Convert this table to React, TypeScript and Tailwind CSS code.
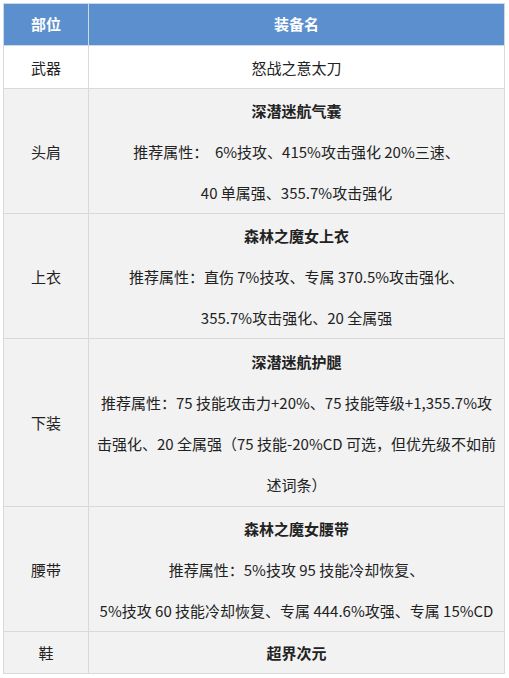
import React from 'react';

type Row = {
  slot: string;
  title?: string;
  lines: string[];
  white?: boolean;
  bold?: boolean;
  h: string;
};

const rows: Row[] = [
  { slot: '武器', lines: ['怒战之意太刀'], white: true, h: 'h-[43px]' },
  {
    slot: '头肩',
    title: '深潜迷航气囊',
    lines: ['推荐属性：  6%技攻、415%攻击强化 20%三速、', '40 单属强、355.7%攻击强化'],
    h: 'h-[125px]',
  },
  {
    slot: '上衣',
    title: '森林之魔女上衣',
    lines: ['推荐属性：直伤 7%技攻、专属 370.5%攻击强化、', '355.7%攻击强化、20 全属强'],
    h: 'h-[125px]',
  },
  {
    slot: '下装',
    title: '深潜迷航护腿',
    lines: [
      '推荐属性：75 技能攻击力+20%、75 技能等级+1,355.7%攻',
      '击强化、20 全属强（75 技能-20%CD 可选，但优先级不如前',
      '述词条）',
    ],
    h: 'h-[168px]',
  },
  {
    slot: '腰带',
    title: '森林之魔女腰带',
    lines: ['推荐属性：5%技攻 95 技能冷却恢复、', '5%技攻 60 技能冷却恢复、专属 444.6%攻强、专属 15%CD'],
    h: 'h-[125px]',
  },
  { slot: '鞋', lines: ['超界次元'], bold: true, h: 'h-[42px]' },
];

export default function App() {
  return (
    <div
      className="w-[509px] h-[678px] bg-white pt-[3px] pl-[3px]"
      style={{ fontFamily: '"Microsoft YaHei", "Noto Sans CJK SC", "Noto Sans", sans-serif' }}
    >
      <table className="w-[501px] border-collapse text-[15px] text-[#222] table-fixed">
        <colgroup>
          <col className="w-[85px]" />
          <col className="w-[416px]" />
        </colgroup>
        <thead>
          <tr className="h-[42px] bg-[#5b8fcd] text-white font-bold">
            <th className="border border-[#cfd9e6] text-center">部位</th>
            <th className="border border-[#cfd9e6] text-center">装备名</th>
          </tr>
        </thead>
        <tbody>
          {rows.map((r) => (
            <tr key={r.slot} className={(r.white ? 'bg-white ' : 'bg-[#f2f2f2] ') + r.h}>
              <td className="border border-[#d9d9d9] text-center leading-[41px] p-0">{r.slot}</td>
              <td className="border border-[#d9d9d9] text-center leading-[41px] p-0">
                {r.title && <div className="font-bold">{r.title}</div>}
                {r.lines.map((l, i) => (
                  <div key={i} className={'whitespace-pre ' + (r.bold ? 'font-bold' : '')}>
                    {l}
                  </div>
                ))}
              </td>
            </tr>
          ))}
        </tbody>
      </table>
    </div>
  );
}
